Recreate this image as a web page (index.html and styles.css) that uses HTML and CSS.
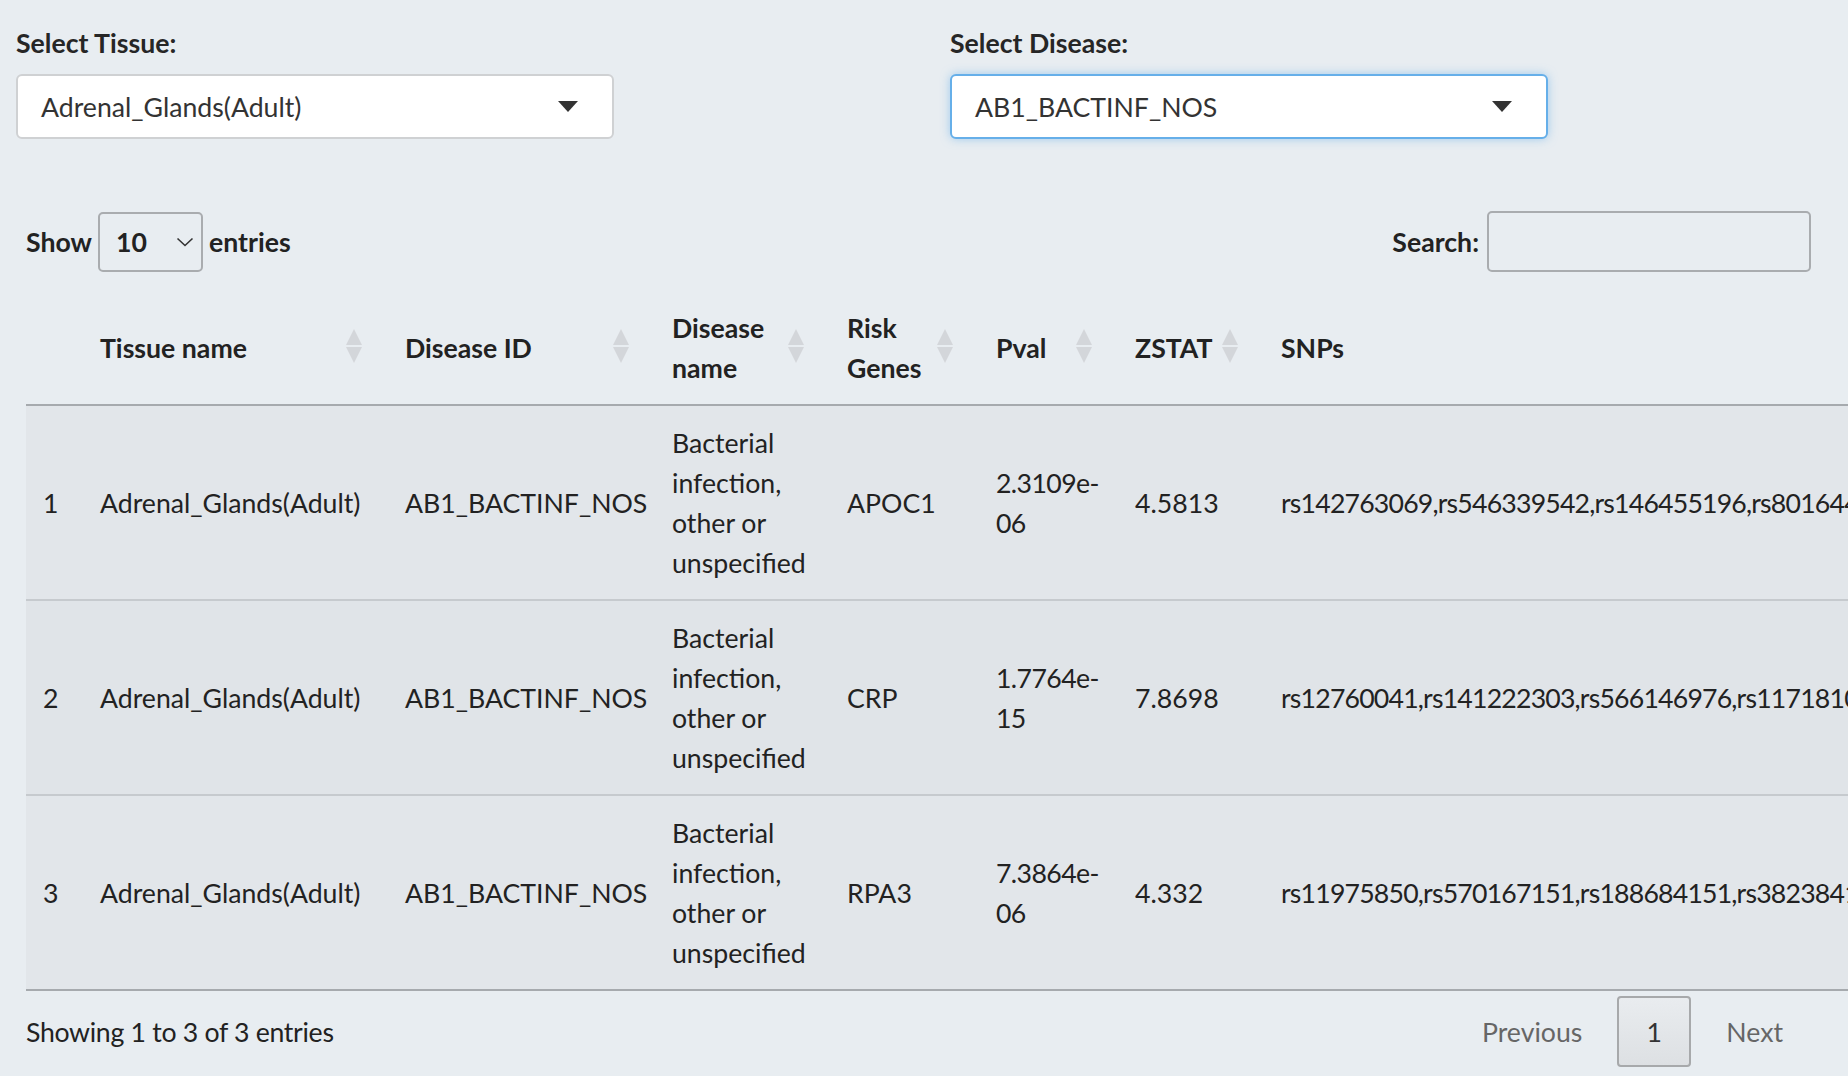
FILE: index.html
```html
<!DOCTYPE html>
<html>
<head>
<meta charset="utf-8">
<link rel="stylesheet" href="styles.css">
</head>
<body>
<div class="filters">
  <div class="field">
    <label class="field-label">Select Tissue:</label>
    <div class="select"><span class="select-value">Adrenal_Glands(Adult)</span><span class="caret"></span></div>
  </div>
  <div class="field">
    <label class="field-label">Select Disease:</label>
    <div class="select focus"><span class="select-value">AB1_BACTINF_NOS</span><span class="caret"></span></div>
  </div>
</div>

<div class="dt-wrapper">
  <div class="dt-top">
    <div class="length">
      <span>Show</span>
      <span class="length-select"><span>10</span>
        <svg class="chev" width="18" height="10" viewBox="0 0 18 10"><path d="M1.5 1.5 L9 8.5 L16.5 1.5" fill="none" stroke="#333" stroke-width="1.6"/></svg>
      </span>
      <span>entries</span>
    </div>
    <div class="search">
      <span>Search:</span>
      <span class="search-input"></span>
    </div>
  </div>

  <table class="dt">
    <colgroup>
      <col class="c-idx"><col class="c-tissue"><col class="c-did"><col class="c-dname"><col class="c-risk"><col class="c-pval"><col class="c-z"><col class="c-snp">
    </colgroup>
    <thead>
      <tr>
        <th></th>
        <th class="sort">Tissue name</th>
        <th class="sort">Disease ID</th>
        <th class="sort">Disease name</th>
        <th class="sort">Risk Genes</th>
        <th class="sort">Pval</th>
        <th class="sort">ZSTAT</th>
        <th>SNPs</th>
      </tr>
    </thead>
    <tbody>
      <tr class="odd">
        <td>1</td>
        <td>Adrenal_Glands(Adult)</td>
        <td>AB1_BACTINF_NOS</td>
        <td>Bacterial infection, other or unspecified</td>
        <td>APOC1</td>
        <td class="num">2.3109e-06</td>
        <td>4.5813</td>
        <td class="snp">rs142763069,rs546339542,rs146455196,rs8016444</td>
      </tr>
      <tr class="even">
        <td>2</td>
        <td>Adrenal_Glands(Adult)</td>
        <td>AB1_BACTINF_NOS</td>
        <td>Bacterial infection, other or unspecified</td>
        <td>CRP</td>
        <td class="num">1.7764e-15</td>
        <td>7.8698</td>
        <td class="snp">rs12760041,rs141222303,rs566146976,rs11718100</td>
      </tr>
      <tr class="odd">
        <td>3</td>
        <td>Adrenal_Glands(Adult)</td>
        <td>AB1_BACTINF_NOS</td>
        <td>Bacterial infection, other or unspecified</td>
        <td>RPA3</td>
        <td class="num">7.3864e-06</td>
        <td>4.332</td>
        <td class="snp">rs11975850,rs570167151,rs188684151,rs3823841,</td>
      </tr>
    </tbody>
  </table>

  <div class="dt-bottom">
    <div class="info">Showing 1 to 3 of 3 entries</div>
    <div class="pagination">
      <span class="pg-btn">Previous</span>
      <span class="pg-btn current">1</span>
      <span class="pg-btn">Next</span>
    </div>
  </div>
</div>
</body>
</html>
```

FILE: styles.css
```css
html, body {
  margin: 0;
  padding: 0;
  overflow: hidden;
}
body {
  width: 1848px;
  height: 1076px;
  background: #e8edf1;
  font-family: "Lato", "Source Sans Pro", sans-serif;
  font-size: 26.67px;
  line-height: 40px;
  color: #222;
}

/* filter selects */
.filters {
  display: grid;
  grid-template-columns: 934px 598px;
  padding: 23px 0 0 16px;
}
.field-label {
  display: block;
  font-weight: 700;
  margin-bottom: 11px;
  color: #262626;
}
.select {
  box-sizing: border-box;
  width: 598px;
  height: 65px;
  background: #fff;
  border: 2px solid #cfd1d3;
  border-radius: 6px;
  display: flex;
  align-items: center;
  justify-content: space-between;
  padding: 0 34px 0 23px;
  color: #333;
}
.select.focus {
  border-color: #66afe9;
  box-shadow: 0 0 10px rgba(102, 175, 233, 0.55);
}
.caret {
  width: 0;
  height: 0;
  border-left: 10px solid transparent;
  border-right: 10px solid transparent;
  border-top: 11px solid #333;
}

/* datatable wrapper */
.dt-wrapper {
  margin: 72px 37px 0 26px;
}
.dt-top {
  display: flex;
  justify-content: space-between;
  align-items: center;
  height: 61px;
  font-weight: 700;
}
.length {
  display: flex;
  align-items: center;
}
.length-select {
  box-sizing: border-box;
  width: 105px;
  height: 60px;
  margin: 0 6px 0 6px;
  border: 2px solid #a9acaf;
  border-radius: 5px;
  display: flex;
  align-items: center;
  justify-content: space-between;
  padding: 0 7px 0 16px;
}
.chev {
  display: block;
}
.search {
  display: flex;
  align-items: center;
}
.search-input {
  box-sizing: border-box;
  width: 324px;
  height: 61px;
  margin-left: 8px;
  border: 2px solid #a9acaf;
  border-radius: 5px;
}

/* table */
.dt {
  margin-top: 19px;
  border-collapse: separate;
  border-spacing: 0;
  table-layout: fixed;
  width: 2738px;
}
.c-idx { width: 57px; }
.c-tissue { width: 305px; }
.c-did { width: 267px; }
.c-dname { width: 175px; }
.c-risk { width: 149px; }
.c-pval { width: 139px; }
.c-z { width: 146px; }
.c-snp { width: 1500px; }

.dt th {
  position: relative;
  text-align: left;
  font-weight: 700;
  padding: 16.5px 17px;
  border-bottom: 2px solid #a6aaae;
  vertical-align: middle;
}
.dt th.sort {
  padding-right: 50px;
}
.dt th.sort::before,
.dt th.sort::after {
  content: "";
  position: absolute;
  right: 26px;
  width: 0;
  height: 0;
  border-left: 8px solid transparent;
  border-right: 8px solid transparent;
}
.dt th.sort::before {
  bottom: calc(50% + 3px);
  border-bottom: 16px solid #d3d6da;
}
.dt th.sort::after {
  top: calc(50% - 1px);
  border-top: 16px solid #d3d6da;
}
.dt td {
  padding: 16.5px 17px;
  vertical-align: middle;
  border-top: 2px solid #c6cace;
}
.dt tbody tr:first-child td {
  border-top: none;
}
.dt tbody tr:last-child td {
  border-bottom: 2px solid #a6aaae;
}
.dt tr.odd td {
  background: #e2e6ea;
}
.dt tr.even td {
  background: #e0e4e8;
}
.dt td.num {
  letter-spacing: -0.6px;
}
.dt td.snp {
  white-space: nowrap;
  letter-spacing: -0.8px;
}

/* bottom */
.dt-bottom {
  display: flex;
  justify-content: space-between;
  align-items: center;
  margin-top: 5px;
  height: 71px;
}
.info {
  letter-spacing: -0.3px;
}
.pagination {
  display: flex;
  align-items: center;
}
.pg-btn {
  box-sizing: border-box;
  height: 71px;
  display: flex;
  align-items: center;
  padding: 0 27px;
  margin-left: 6px;
  color: #666;
  border: 2px solid transparent;
  border-radius: 4px;
}
.pg-btn:last-child {
  padding-right: 26px;
}
.pg-btn.current {
  width: 74px;
  padding: 0;
  justify-content: center;
  color: #333;
  border-color: #a7a9ab;
  background: linear-gradient(to bottom, #e9ecef 0%, #dde0e3 100%);
}
```
